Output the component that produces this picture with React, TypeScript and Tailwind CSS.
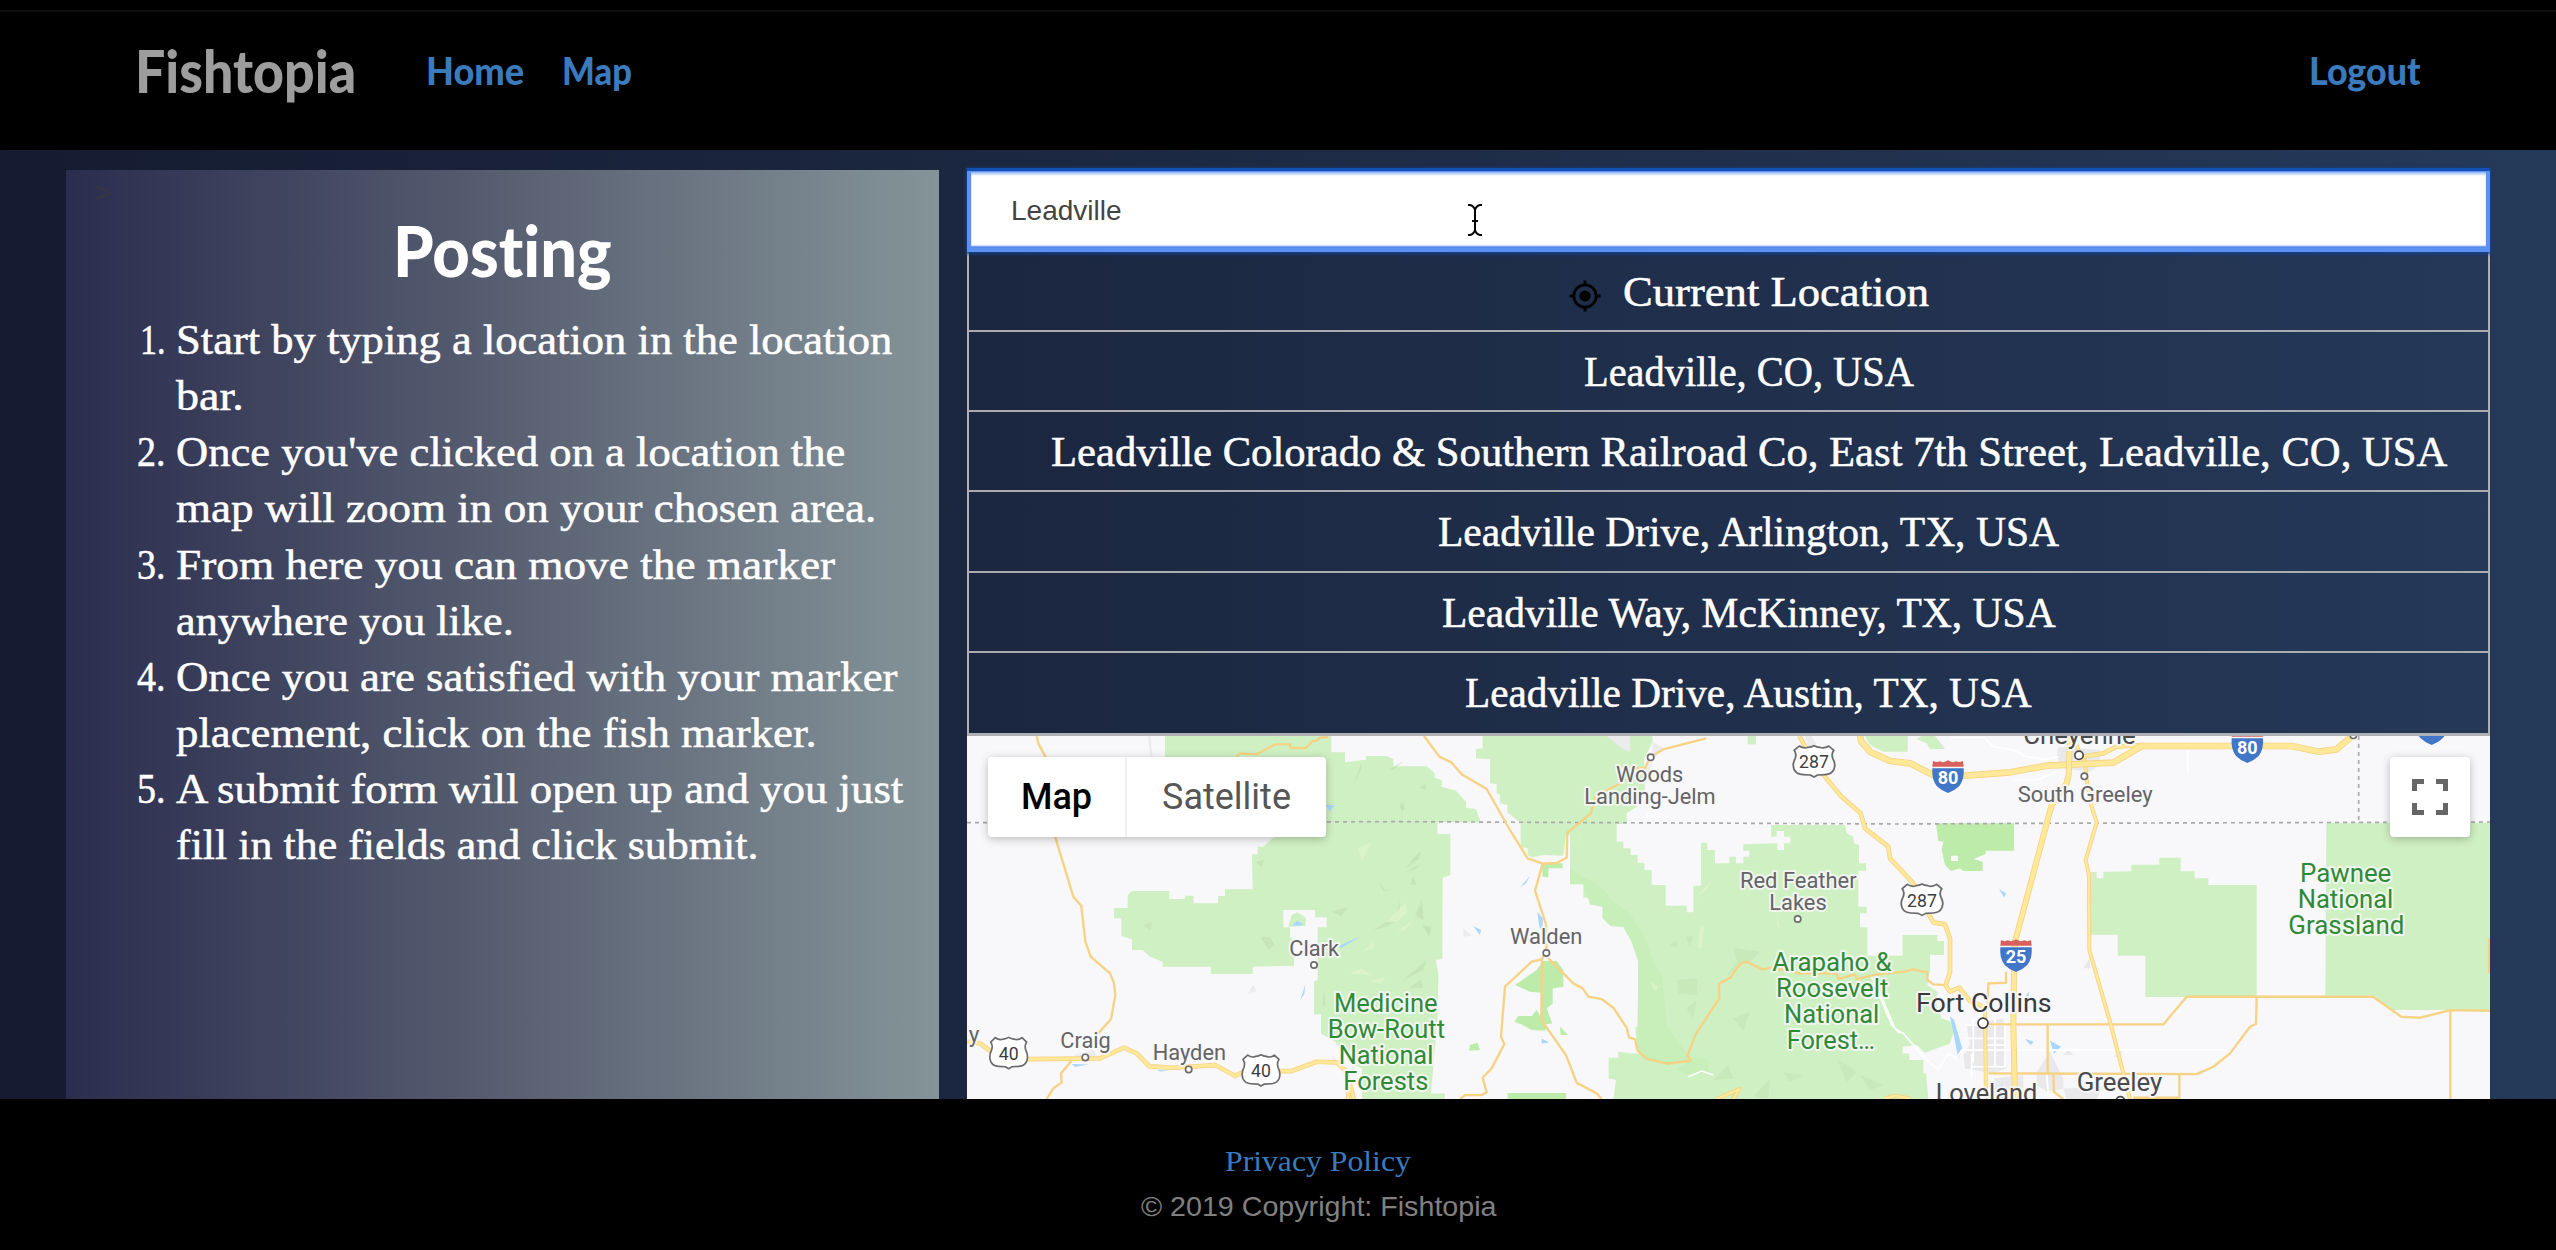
import { useLayoutEffect, useRef, useState } from "react";
import type { ReactNode } from "react";

/* Sets a run of text to an exact measure by condensing or widening its glyphs. */
function Fit({ width, className = "", children }: { width: number; className?: string; children: ReactNode }) {
  const ref = useRef<HTMLSpanElement>(null);
  const [scale, setScale] = useState(1);
  useLayoutEffect(() => {
    if (ref.current) setScale(width / ref.current.offsetWidth);
  }, [width]);
  return (
    <span className={`inline-block whitespace-nowrap text-left align-top ${className}`} style={{ width }}>
      <span ref={ref} className="inline-block origin-left" style={{ transform: `scaleX(${scale})` }}>
        {children}
      </span>
    </span>
  );
}

const steps: [string, number][][] = [
  [["Start by typing a location in the location", 715], ["bar.", 67]],
  [["Once you've clicked on a location the", 668], ["map will zoom in on your chosen area.", 699]],
  [["From here you can move the marker", 658], ["anywhere you like.", 337]],
  [["Once you are satisfied with your marker", 720], ["placement, click on the fish marker.", 640]],
  [["A submit form will open up and you just", 726], ["fill in the fields and click submit.", 581]],
];

const places: [string, number][] = [
  ["Leadville, CO, USA", 330],
  ["Leadville Colorado & Southern Railroad Co, East 7th Street, Leadville, CO, USA", 1396],
  ["Leadville Drive, Arlington, TX, USA", 621],
  ["Leadville Way, McKinney, TX, USA", 614],
  ["Leadville Drive, Austin, TX, USA", 567],
];

function Road({ d, w = 8 }: { d: string; w?: number }) {
  return (
    <g fill="none" strokeLinejoin="round">
      <path d={d} stroke="#f6d285" strokeWidth={w > 9 ? w : 7} />
      {w > 9 && <path d={d} stroke="#ffe998" strokeWidth={w - 5} />}
    </g>
  );
}

type LabelProps = { x: number; x2: number; y: number; t: string; size?: number; fill?: string };
function Label({ x, x2, y, t, size = 66, fill = "#646466" }: LabelProps) {
  return (
    <text x={x} y={y} textLength={x2 - x} lengthAdjust="spacingAndGlyphs" fontSize={size} fill={fill} stroke="#f8f7f9" strokeWidth="12" strokeOpacity="0.85" strokeLinejoin="round" style={{ paintOrder: "stroke" }}>
      {t}
    </text>
  );
}

function Dot({ x, y, r = 9.5, c = "#6b6b6d" }: { x: number; y: number; r?: number; c?: string }) {
  return <circle cx={x} cy={y} r={r} fill="#fff" stroke={c} strokeWidth="5" />;
}

function UsShield({ x, y, n, wide = false }: { x: number; y: number; n: string; wide?: boolean }) {
  return (
    <g transform={`translate(${x} ${y})`}>
      <g transform={wide ? "scale(1.1 1)" : undefined}>
        <path
          d="M-40-47Q-28-38-16-43Q-7-44 0-48Q7-44 16-43Q28-38 40-47L54-34Q46-22 52-8Q60 8 54 24Q48 38 30 39L10 40L0 46L-10 40L-30 39Q-48 38-54 24Q-60 8-52-8Q-46-22-54-34Z"
          fill="#fff"
          stroke="#6b6b6d"
          strokeWidth="5"
          strokeLinejoin="round"
        />
      </g>
      <text x="0" y="20" textAnchor="middle" fontSize="53" fill="#3c3c3e">{n}</text>
    </g>
  );
}

function Interstate({ x, y, n }: { x: number; y: number; n: string }) {
  return (
    <g transform={`translate(${x} ${y})`}>
      <path d="M-45-47Q-34-41-25-46Q-12-40 0-49Q12-40 25-46Q34-41 45-47L47-30H-47Z" fill="#d8615f" />
      <path d="M-47-25H47Q50 8 34 28Q20 42 0 49Q-20 42-34 28Q-50 8-47-25Z" fill="#4176c9" />
      <text x="0" y="22" textAnchor="middle" fontSize="54" fontWeight="700" fill="#fff">{n}</text>
    </g>
  );
}

const FOREST = "#cff0c2";
const PARK = "#bdeba9";
const GREEN = "#2f8a35";

function MapCanvas() {
  return (
    <svg viewBox="21 33 4569 1089" preserveAspectRatio="none" className="block h-full w-full" fontFamily="Roboto, sans-serif">
      <rect x="0" y="0" width="4620" height="1200" fill="#f8f7f9" />
      {/* western forests */}
      <path fill={FOREST} d="M615 33H1114V82H1155V112L1218 104V93H1280L1300 103V124H1400L1424 145V158L1445 165V185L1488 197L1518 230V248L1548 252L1562 292H1432V327H1471V450L1448 458L1447 702L1427 705L1435 745L1433 870L1413 1105H1454V1122H1206V1030L1180 1020L1125 950L1083 925V868H1062V768L1073 765V607H1100V577H1065V555H970V607H990V640H1002V722L878 725V747H753V725H608V710L570 695L548 675H516V643L484 633V580H462V549H503V510L515 498H628V522H675V512H701V535H774V513H795V493H878L876 388H893V365H910L960 320V200L615 95Z" />
      <path fill={FOREST} d="M985 605L995 570L1012 562L1037 578V602Z" />
      <path fill="#a9d6fb" d="M996 602L1012 587L1030 598L1022 602Z M1098 240H1124L1110 260Z M1138 662L1205 632L1142 670Z M1036 778L1020 828L1033 806Z M335 1017L385 1018L345 1026Z M590 1034L628 1036L600 1039Z" />
      <g fill="#bfe0b2" opacity="0.6">
        <path d="M1202 115L1205 130L1183 177Z M1285 135L1330 108L1300 135Z M1378 188L1398 177V197Z M1318 250L1330 228L1334 255Z M887 412L912 403L905 426Z M1345 415L1383 378L1378 403Z M1338 440L1378 418L1368 433Z M1255 470L1275 495L1307 493L1270 498Z M1350 480L1358 455L1371 480Z M1115 560L1165 545L1145 573Z M1240 615L1305 575L1320 528L1318 580L1280 605Z M1370 575L1385 538L1390 585Z M1388 602L1412 605L1408 632Z M902 635L930 637L944 660L925 675Z M550 600L577 590L570 614Z M1330 765L1400 705L1390 735Z M1345 790L1382 765L1390 788Z M1090 795L1098 835L1088 843Z" />
      </g>
      <g fill="#dcf5c8" opacity="0.8">
        <path d="M1195 370L1235 352L1205 408Z M1280 590L1338 530L1340 565L1310 590Z M1308 625L1360 583L1340 610Z M1208 680L1243 648L1240 670Z M1168 745L1205 730L1240 752Z M1230 768L1278 755L1262 775Z" />
      </g>
      <path fill="#ececee" d="M862 808L880 778L890 798Z M340 990L400 975L415 1000L370 1005Z M1112 985L1160 1040L1170 1060L1130 1020Z" />
      <path fill="none" stroke="#ececee" strokeWidth="7" d="M568 33L574 95" />

      <g transform="translate(1320 0)">
        <path fill={FOREST} d="M248 33H757L758 50L733 100L735 200L710 245L680 265V297H650V350H670V370H692V390H713V413H733V435H755V480H797V542H860V562H880V482H903V353H922V375H945V415H988V395H1008V415H1030V395H1048V377H1030V358L1132 355V375H1152V355H1171V335H1152V318H1130V335H1113V300H1335L1340 325L1360 335L1362 355L1377 360V415H1398V437H1375V498V545H1400V565H1380V607H1402V692H1508V630H1612V648H1632V690H1590V735L1582 780L1612 800L1610 840L1625 880L1655 890L1662 920L1650 955L1575 983L1550 960L1508 965V985H1528V1005H1570V1045H1578L1585 1122H640L648 1065L626 1060V998H655V980L700 985H737V958H710L706 905H715V710L695 650L670 605L632 603L608 580V545L570 538V520L550 517V478L510 475V330H498L490 392L430 390L395 397L383 390V370L362 365V295L350 285L322 262V240L300 235V210L290 205V178L270 175V103L228 100V72L248 70Z" />
        <path fill="#c8eeba" d="M510 430L548 455L595 478L640 530L690 565L735 640L758 705L785 750L800 900L860 985L890 1010L800 1016L740 1000L712 970L715 710L695 650L670 605L632 603L608 580V545L570 538L550 478H510Z M880 1000L920 1000L930 1040L870 1050L830 1035Z" />
        <path fill="#bfe0b2" opacity="0.45" d="M810 660L830 645V670Z M858 635H880L868 665Z M830 765L893 760L890 810L835 805Z M1000 668L1080 680L1050 712L1010 705Z M980 750L1015 705L1030 712L1000 745Z M860 850L890 825L880 880Z M1000 880L1050 860L1030 915Z M1150 1042L1210 1050L1170 1070Z M1060 1115L1110 1062L1105 1122Z M940 1065L985 1020L1000 1060Z M1310 1000L1370 1040L1340 1070Z M1380 1050L1450 1080L1410 1095Z M12 245L5 270L0 230Z M45 570L65 525L72 580Z M15 430L60 380L45 415Z M68 600L95 610L88 635Z" />
        <path fill="#dcf5c8" opacity="0.8" d="M885 520L935 465L920 495Z M900 605L912 600L905 670L893 668Z M750 770L775 785L765 800Z M540 325L548 352L543 350Z M1130 570L1140 610L1130 600Z" />
        <path fill={PARK} d="M430 708H470L490 735V785L458 790V835L440 850L457 895L425 900V803L390 800L345 780L410 735Z M343 890L355 873H395L410 855L440 905L435 917L395 915L365 898Z M480 905L504 930H482Z M210 960L232 953L240 975L208 977Z M425 415H488V430H445V457L428 455Z M323 1104H498V1122H323Z" />
        <path fill={FOREST} d="M1043 33H1068V58H1043Z" />
        <path fill="#ececee" d="M620 33H690V80L668 72Z M758 50L790 70L735 130L733 190L755 120Z M190 610L215 632L190 635Z M1215 33H1235L1250 60L1225 65Z" />
        <path fill="#a9d6fb" d="M390 452L360 487L378 475Z M412 560L428 580V620L418 605Z M220 603L243 615L240 630Z M425 940L447 952L425 955Z" />
        <path fill="none" stroke="#fff" strokeWidth="5" d="M755 240L735 290 M865 1055L905 1038L940 1050 M1415 755L1475 900L1500 925" />
      </g>

      <g transform="translate(2670 0)">
        <path fill={FOREST} d="M45 33H173V80H100L60 60Z M200 42L215 33H255L285 72H240L230 55Z M723 441H740V460H760V441L844 439V419H928V398H992V439H1034V460H1075V480H1220V816H886V692H803V629H723Z M1429 293H1920V855H1623L1569 812H1426Z" />
        <path fill={PARK} d="M258 295H492V377H407V387L370 402L398 410V438H340L330 430L303 438L285 420L275 375L280 350L265 348Z" />
        <path fill="#f8f7f9" d="M303 392H324V408H303Z" />
        <path fill="#e9e9eb" d="M625 65L750 75V120L720 140L640 130L620 95Z M350 900L460 880L470 1030L430 1045L345 1030L340 990L360 960Z M560 1040L600 980L640 1060L640 1090L590 1100L560 1080Z M700 730L718 700L722 730Z M430 1060L520 1050L520 1122H430Z M640 990L655 975L670 990Z M790 995L818 970L812 998Z M640 1090L760 1085L740 1122H650Z" />
        <path fill="#a9d6fb" d="M300 873L312 885L337 970L325 1000Z M447 492L468 505L463 518Z M525 942L552 950L542 960Z M600 947L633 965L612 985Z M455 1075L465 1122H445Z M525 815L537 800L535 825Z" />
        <g fill="none" stroke="#fff" strokeWidth="5">
          <path d="M300 37H405L430 65L490 75L530 95L590 103L625 95 M490 165L560 165L620 140 M1013 75V145 M70 760L135 910L160 925L230 1005L265 1033L295 985L320 1000L335 975H1130 M345 900H465V1025H365 M345 940H465 M370 880V1010 M435 880V1025 M400 960H465 M365 985V1060 M430 1060L425 1122 M590 1050L595 1105L610 1122" />
        </g>
      </g>

      <path fill="none" stroke="#aaa8ac" strokeWidth="5" strokeDasharray="12 12" d="M21 293L1320 290L2820 297L3200 295L4590 291 M4196 33V290" />

      <Road d="M230 33L235 55L257 97L286 337L340 515L364 543L376 650L392 695L450 745L462 775L466 810L453 882L415 925" />
      <Road d="M830 97L838 85L890 88L945 58H990L992 69H1037L1058 48L1070 47L1080 38L1105 36" />
      <Road d="M340 1000L303 1045L305 1072L280 1090L260 1122" />
      <Road w={14} d="M21 950L60 955L115 995L205 1002L420 1000L492 968L530 985L568 1024L640 1028L765 1020L826 1053L860 1035L955 1038H995L1070 1010L1130 1012L1155 1035L1170 1080L1163 1122 M1170 1080L1182 1122" />
      <g transform="translate(1320 0)">
        <Road d="M72 33L118 95L155 113L185 148L260 192L330 315L383 400L428 416L470 414L500 398L502 323L573 265L585 215L655 178L710 130H735L750 97L790 73L918 40" />
        <Road d="M428 416L405 497L438 598L440 665L426 703L395 710L315 785L303 935L313 957L275 1030L248 1058L260 1102L245 1110H195L180 1122" />
        <Road d="M426 700L424 885L498 990L530 1073L590 1105L605 1122" />
        <Road d="M445 700L520 775L548 790L565 815L605 822L640 848L680 908L687 937L705 942L712 975L737 1000L800 1016L872 1007L863 990L887 928L958 820L957 777L992 757L1020 717L1040 710L1087 733L1115 728L1200 745H1310L1315 762L1340 755L1365 748L1370 762L1430 748L1515 740L1540 732L1565 740H1582V765L1600 778L1635 780" />
        <Road w={12} d="M950 1122L1018 1092L1000 1122 M1455 1120L1485 1112L1530 1120" />
        <Road w={14} d="M1198 33L1240 110L1275 155L1325 215L1382 265L1395 310L1465 365L1470 400L1540 475L1565 530L1600 592L1635 598L1650 640V742L1637 780L1650 800L1678 788L1710 828L1750 845" />
      </g>
      <g transform="translate(2670 0)">
        <Road d="M468 740V773L415 775L413 850 M415 898H940L1010 815H1569L1654 875L1711 878L1801 855L1920 857 M593 898V1045 M415 1045L1040 1047L1090 1025L1140 985L1200 905L1218 897L1220 815 M610 1045L612 1100L640 1122 M988 1047V1118H850 M1801 855V1122 M1917 640V745" />
        <Road w={14} d="M700 95L760 85L800 65L880 60" />
        <Road w={12} d="M405 850L408 1122" />
        <Road w={12} d="M680 60L690 90L705 110L712 180L722 235L740 293L707 405L717 450L718 675L780 890L840 1122" />
        <Road w={20} d="M30 30L33 48L60 80L120 108L180 115L245 148L345 152L480 142L590 122L790 113L875 63H1325L1406 80L1460 73L1506 33" />
        <Road w={18} d="M660 33L656 150L650 175L605 240L495 650L492 740L490 900L495 1122" />
      </g>

      <UsShield x={146} y={985} n="40" />
      <UsShield x={903} y={1037} n="40" />
      <UsShield x={2562} y={110} n="287" wide />
      <UsShield x={2886} y={525} n="287" wide />
      <Interstate x={2964} y={155} n="80" />
      <Interstate x={3168} y={692} n="25" />
      <Interstate x={3862} y={65} n="80" />
      <Interstate x={4415} y={11} n="80" />

      <Label x={26} x2={58} y={950} t="y" />
      <Label x={301} x2={452} y={970} t="Craig" />
      <Label x={578} x2={798} y={1006} t="Hayden" />
      <Label x={988} x2={1137} y={692} t="Clark" />
      <Label x={1122} x2={1433} y={862} t="Medicine" size={76} fill={GREEN} />
      <Label x={1103} x2={1455} y={940} t="Bow-Routt" size={76} fill={GREEN} />
      <Label x={1136} x2={1420} y={1018} t="National" size={76} fill={GREEN} />
      <Label x={1150} x2={1405} y={1096} t="Forests" size={76} fill={GREEN} />
      <Dot x={376} y={997} />
      <Dot x={686} y={1033} />
      <Dot x={1062} y={720} />
      <g transform="translate(1320 0)">
        <Label x={648} x2={850} y={172} t="Woods" />
        <Label x={553} x2={947} y={238} t="Landing-Jelm" />
        <Label x={1020} x2={1370} y={488} t="Red Feather" />
        <Label x={1108} x2={1280} y={554} t="Lakes" />
        <Label x={330} x2={547} y={657} t="Walden" />
        <Label x={1117} x2={1475} y={738} t="Arapaho &" size={76} fill={GREEN} />
        <Label x={1128} x2={1465} y={816} t="Roosevelt" size={76} fill={GREEN} />
        <Label x={1152} x2={1438} y={894} t="National" size={76} fill={GREEN} />
        <Label x={1160} x2={1425} y={972} t="Forest…" size={76} fill={GREEN} />
        <Dot x={752} y={97} />
        <Dot x={1193} y={582} />
        <Dot x={439} y={684} />
      </g>
      <g transform="translate(2670 0)">
        <Label x={520} x2={857} y={56} t="Cheyenne" size={78} fill="#4a4a4c" />
        <Label x={503} x2={908} y={230} t="South Greeley" />
        <Label x={198} x2={605} y={860} t="Fort Collins" size={80} fill="#3a3a3c" />
        <Label x={680} x2={937} y={1097} t="Greeley" size={76} fill="#4a4a4c" />
        <Label x={257} x2={562} y={1131} t="Loveland" size={76} fill="#4a4a4c" />
        <Label x={1350} x2={1624} y={470} t="Pawnee" size={76} fill={GREEN} />
        <Label x={1343} x2={1630} y={548} t="National" size={76} fill={GREEN} />
        <Label x={1315} x2={1663} y={627} t="Grassland" size={76} fill={GREEN} />
        <Dot x={687} y={91} r={12.5} c="#4a4a4c" />
        <Dot x={703} y={154} />
        <Dot x={399} y={894} r={15} c="#3a3a3c" />
        <Dot x={811} y={1127} r={12.5} c="#4a4a4c" />
        <Dot x={1510} y={31} />
      </g>
    </svg>
  );
}

function LocationIcon() {
  return (
    <svg viewBox="0 0 32 32" className="mt-[28px] mr-[22px] h-8 w-8 shrink-0">
      <circle cx="16" cy="16" r="11.2" fill="none" stroke="#000" strokeWidth="2.8" />
      <circle cx="16" cy="16" r="5.6" fill="#000" />
      <path d="M16 0.5V5M16 27V31.5M0.5 16H5M27 16H31.5" stroke="#000" strokeWidth="2.8" />
    </svg>
  );
}

export default function App() {
  return (
    <div className="flex h-[1250px] w-full flex-col overflow-hidden bg-black bg-linear-to-r from-[#151c31] to-[#253959] font-['Liberation_Serif',serif]">
      <header className="flex h-[150px] shrink-0 flex-col bg-black">
        <div className="h-[12px] shrink-0 border-b-2 border-[#0e0e10]" />
        <nav className="flex items-start pr-[136px] pl-[135px] font-['Lato',sans-serif] font-black text-[#3a7abd] [font-variant-ligatures:none]">
          <a className="mt-[24px] text-[59px] leading-[70px] text-[#9d9d9d]">
            <Fit width={221}>Fishtopia</Fit>
          </a>
          <a className="mt-[35px] ml-[70px] text-[38px] leading-[46px]">
            <Fit width={98}>Home</Fit>
          </a>
          <a className="mt-[35px] ml-[38px] text-[38px] leading-[46px]">
            <Fit width={70}>Map</Fit>
          </a>
          <a className="mt-[35px] ml-auto text-[38px] leading-[46px]">
            <Fit width={111}>Logout</Fit>
          </a>
        </nav>
      </header>

      <main className="flex min-h-0 flex-1 pt-[18px] pr-[66px] pl-[66px]">
        <section className="mt-[2px] flex w-[873px] shrink-0 flex-col bg-linear-to-r from-[#2b2d4e] via-[#585f71] to-[#859499] text-white">
          <div className="h-[38px] pt-[8px] pl-[29px] font-['Liberation_Sans',sans-serif] text-[28px] leading-[30px] text-[#36373f]">&gt;</div>
          <h1 className="text-center font-['Lato',sans-serif] text-[71px] leading-[84px] font-black [font-variant-ligatures:none]">
            <Fit width={219}>Posting</Fit>
          </h1>
          <ol className="mt-[20px] text-[42px] leading-[56.15px] [-webkit-text-stroke:0.5px_white]">
            {steps.map((lines, i) => (
              <li key={i} className="flex">
                <span className="w-[100px] text-right">
                  <Fit width={i === 0 ? 26 : 29}>{i + 1}.</Fit>
                </span>
                <span className="ml-[10px] flex flex-col">
                  {lines.map(([text, width]) => (
                    <Fit key={text} width={width + 1}>{text}</Fit>
                  ))}
                </span>
              </li>
            ))}
          </ol>
        </section>

        <section className="ml-[28px] flex w-[1523px] shrink-0 flex-col">
          <div className="relative flex h-[84px] shrink-0 items-start bg-white pl-[44px] font-['Liberation_Sans',sans-serif] text-[28px] leading-8 text-[#444] shadow-[inset_0_4px_0_-1px_#1450b4,inset_0_0_0_4px_#5b92f2,inset_0_3px_3px_3px_#8fb4fb,inset_0_-3px_2px_3px_#4b83ea,0_1px_3px_1px_#17418b]">
            <span className="mt-[27px]">Leadville</span>
            <svg viewBox="0 0 16 34" className="absolute top-[35px] left-[500px] h-[34px] w-4" fill="none" stroke="#000" strokeWidth="2">
              <path d="M1 2H3Q7 3 8 7Q9 3 13 2H15M8 6V28M1 32H3Q7 31 8 27Q9 31 13 32H15M5 18H11" />
            </svg>
          </div>
          <ul className="shrink-0 border-x-2 border-b-[3px] border-[#aeb0b3] text-[42px] leading-[80px] text-white [-webkit-text-stroke:0.5px_white]">
            <li className="flex h-[80px] justify-center border-b-2 border-[#aaacb0] pl-10">
              <LocationIcon />
              <Fit width={306}>Current Location</Fit>
            </li>
            {places.map(([text, width]) => (
              <li key={text} className="flex h-[80.2px] justify-center border-b-2 border-[#aaacb0] pl-10 last:border-b-0">
                <Fit width={width}>{text}</Fit>
              </li>
            ))}
          </ul>
          <div className="relative min-h-0 flex-1">
            <MapCanvas />
            <div className="absolute top-[21px] left-[21px] flex h-[80px] rounded-[4px] bg-white font-['Roboto',sans-serif] text-[36px] leading-[80px] shadow-[0_2px_8px_rgba(0,0,0,0.25)]">
              <button className="w-[139px] border-r-2 border-[#f0f0f0] font-medium text-black">Map</button>
              <button className="w-[199px] text-[#565656]">Satellite</button>
            </div>
            <button className="absolute top-[21px] right-[20px] flex h-[80px] w-[80px] items-center justify-center rounded-[4px] bg-white shadow-[0_2px_8px_rgba(0,0,0,0.25)]">
              <svg viewBox="0 0 36 36" className="h-9 w-9" fill="none" stroke="#666" strokeWidth="5">
                <path d="M2.500 12V2.500H12M24 2.500H33.500V12M33.500 24V33.500H24M12 33.500H2.500V24" />
              </svg>
            </button>
          </div>
        </section>
      </main>

      <footer className="flex h-[151px] shrink-0 flex-col items-center bg-black pl-[80px]">
        <a className="mt-[44px] text-[30px] leading-[36px] text-[#3a7abd]">
          <Fit width={186}>Privacy Policy</Fit>
        </a>
        <p className="mt-[12px] font-['Liberation_Sans',sans-serif] text-[28px] leading-8 text-[#808080]">
          <Fit width={355}>© 2019 Copyright: Fishtopia</Fit>
        </p>
      </footer>
    </div>
  );
}
